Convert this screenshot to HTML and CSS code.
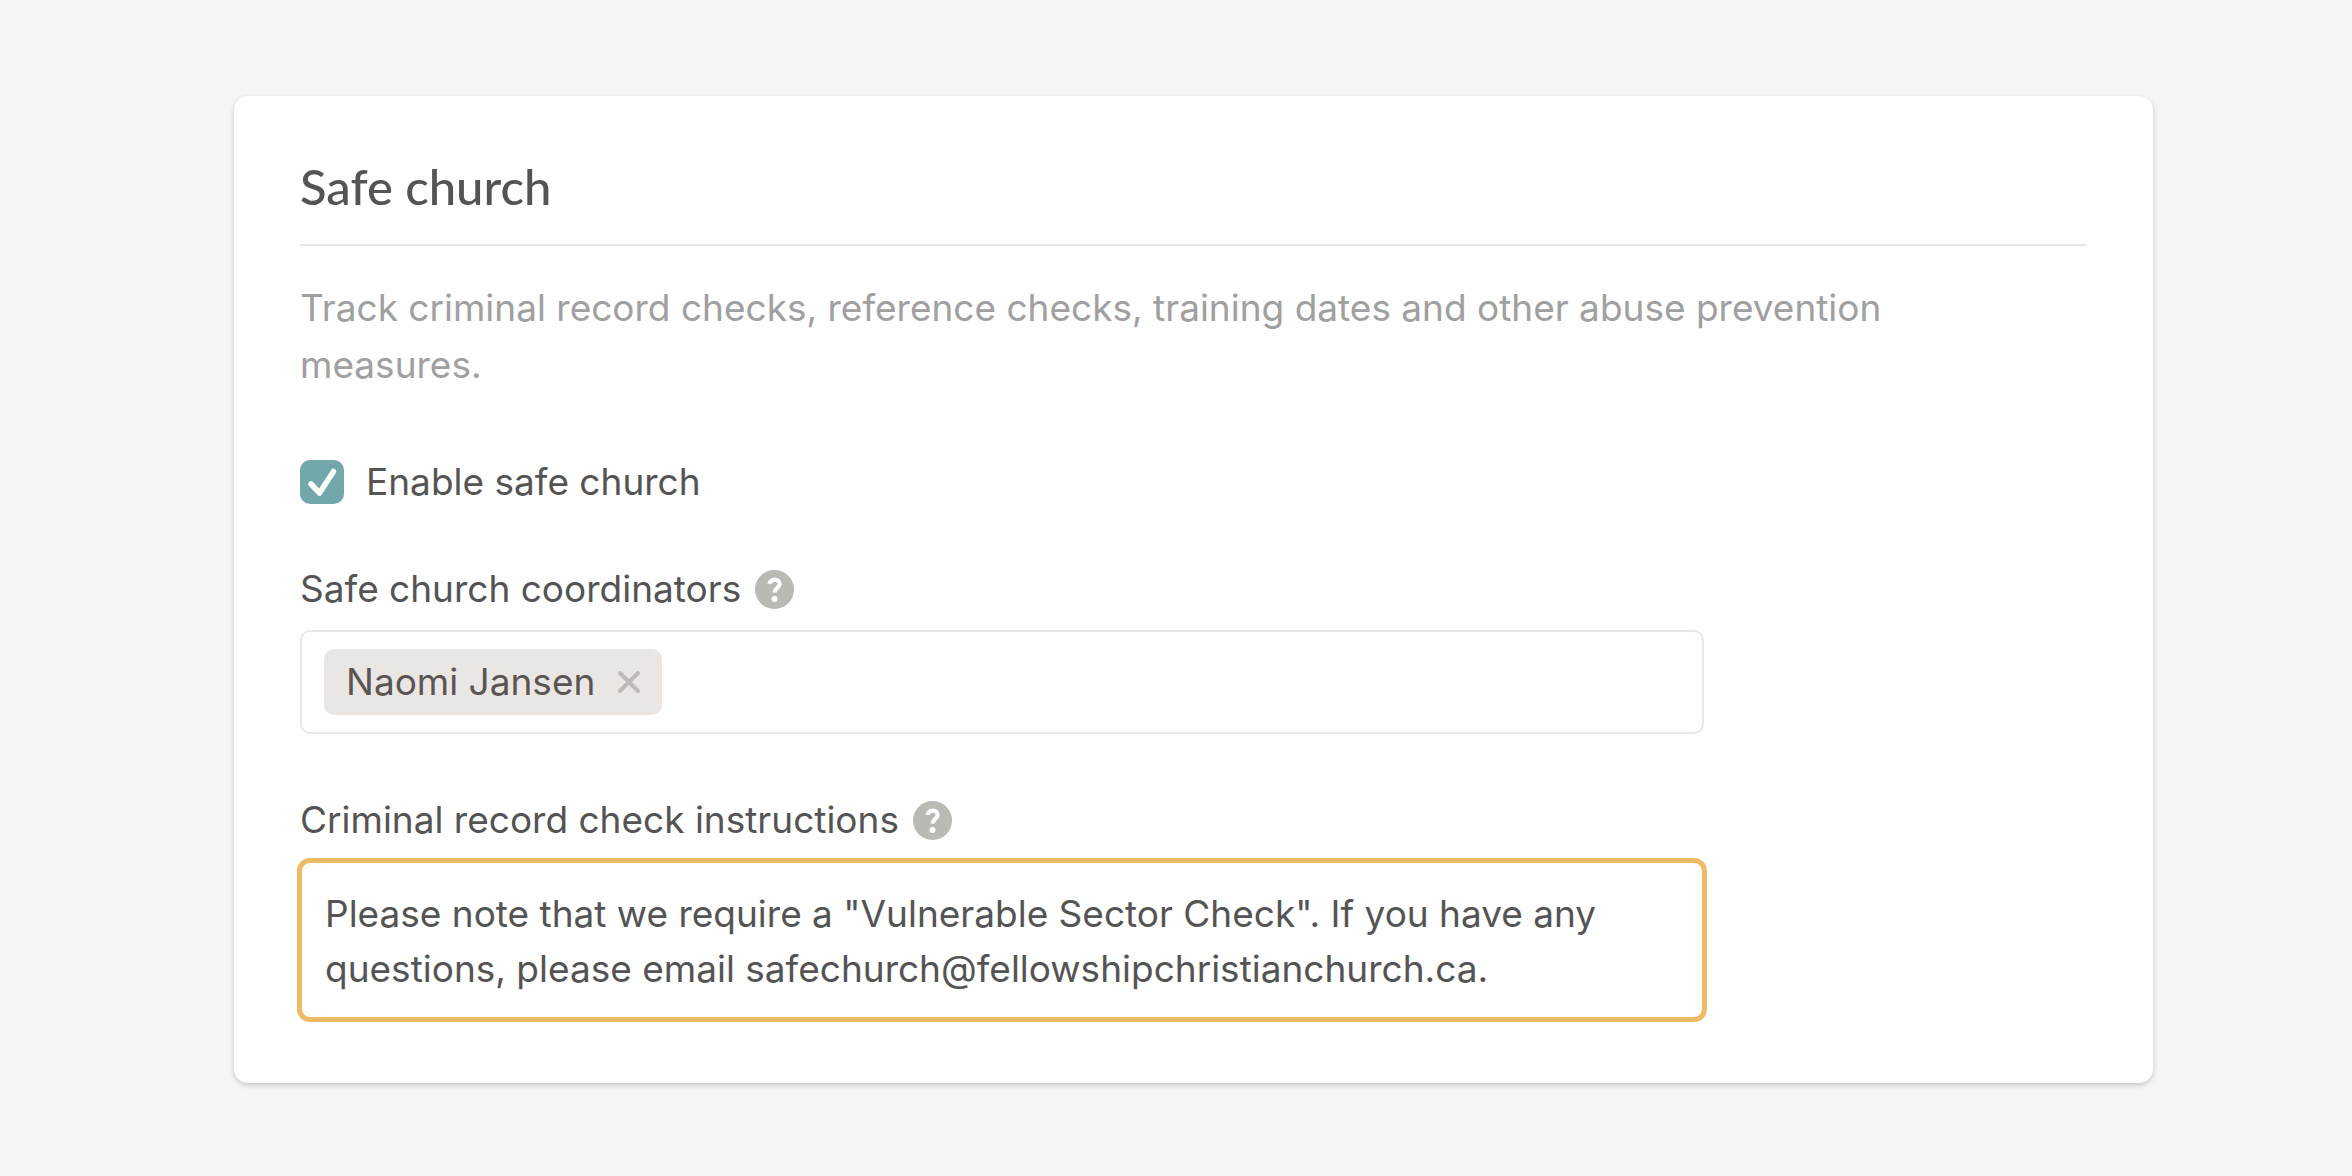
FILE: index.html
```html
<!DOCTYPE html>
<html lang="en">
<head>
<meta charset="utf-8">
<meta name="viewport" content="width=device-width, initial-scale=1">
<title>Safe church</title>
<link rel="stylesheet" href="styles.css">
</head>
<body>
<main class="page">
  <form class="card">
    <h1 class="card-title">Safe church</h1>
    <hr class="divider">
    <p class="intro">Track criminal record checks, reference checks, training dates and other abuse prevention measures.</p>

    <div class="toggle">
      <input class="checkbox" type="checkbox" id="enable" checked>
      <label for="enable">Enable safe church</label>
    </div>

    <div class="field">
      <div class="field-head">
        <label for="coordinators">Safe church coordinators</label>
        <button class="help" type="button" aria-label="Help with coordinators">
          <svg viewBox="0 0 38 38" aria-hidden="true"><circle cx="19" cy="19" r="19"/><path d="M14 13.500C15 7.800 24.200 8.200 24 13.800C23.800 17.500 19.300 17.500 19 22"/><circle class="dot" cx="19" cy="28.300" r="2.900"/></svg>
        </button>
      </div>
      <div class="tag-box">
        <span class="tag">Naomi Jansen
          <button class="tag-remove" type="button" aria-label="Remove Naomi Jansen">
            <svg viewBox="0 0 22 22" aria-hidden="true"><path d="M2 2L20 20M20 2L2 20"/></svg>
          </button>
        </span>
        <input class="tag-input" type="text" id="coordinators">
      </div>
    </div>

    <div class="field">
      <div class="field-head">
        <label for="instructions">Criminal record check instructions</label>
        <button class="help" type="button" aria-label="Help with instructions">
          <svg viewBox="0 0 38 38" aria-hidden="true"><circle cx="19" cy="19" r="19"/><path d="M14 13.500C15 7.800 24.200 8.200 24 13.800C23.800 17.500 19.300 17.500 19 22"/><circle class="dot" cx="19" cy="28.300" r="2.900"/></svg>
        </button>
      </div>
      <textarea class="textarea" id="instructions" rows="2" spellcheck="false">Please note that we require a "Vulnerable Sector Check". If you have any questions, please email safechurch@fellowshipchristianchurch.ca.</textarea>
    </div>
  </form>
</main>
</body>
</html>
```
FILE: styles.css
```css
* {
  box-sizing: border-box;
}

body {
  margin: 0;
  background: #f6f5f3;
  color: #545454;
  font: 400 37px/56px Inter, "Liberation Sans", sans-serif;
}

.page {
  padding: 96px 199px 92px 234px;
}

.card {
  padding: 58px 66px 64px;
  border-radius: 14px;
  background: #fefefe;
  box-shadow: 0 2px 5px rgba(60, 50, 60, 0.24);
}

.card-title {
  margin: 0;
  font: 500 49px/64px Lato, sans-serif;
}

.divider {
  height: 2px;
  margin: 26px 0 33px;
  border: 0;
  background: #e7e7e7;
}

.intro {
  max-width: 1680px;
  margin: 0;
  color: #a0a0a0;
  line-height: 57px;
}

.toggle {
  display: flex;
  align-items: center;
  gap: 22px;
  margin-top: 61px;
}

.checkbox {
  width: 44px;
  height: 44px;
  margin: 0;
  appearance: none;
  border-radius: 10px;
  background: #72a8ac url("data:image/svg+xml,%3Csvg xmlns='http://www.w3.org/2000/svg' viewBox='0 0 44 44'%3E%3Cpath d='M11 24L19.500 33L33.500 11.500' fill='none' stroke='white' stroke-width='5.500' stroke-linecap='round' stroke-linejoin='round'/%3E%3C/svg%3E");
}

.field {
  max-width: 1404px;
  margin-top: 51px;
}

.field + .field {
  margin-top: 58px;
}

.field-head {
  display: flex;
  align-items: center;
  gap: 14px;
  margin-bottom: 13px;
}

.help,
.tag-remove {
  padding: 0;
  border: 0;
  background: none;
}

.help {
  width: 39px;
  height: 39px;
}

.help svg,
.tag-remove svg {
  display: block;
  width: 100%;
}

.help svg {
  fill: #b8bab3;
}

.help path {
  fill: none;
  stroke: #fefefe;
  stroke-width: 4;
}

.help .dot {
  fill: #fefefe;
}

.tag-box {
  display: flex;
  align-items: center;
  height: 104px;
  padding: 0 22px;
  border: 2px solid #e8e8e8;
  border-radius: 10px;
}

.tag {
  display: flex;
  align-items: center;
  gap: 23px;
  height: 66px;
  padding: 0 22px;
  border-radius: 10px;
  background: #eae6e4;
  color: #5a5553;
}

.tag-remove {
  width: 22px;
  height: 22px;
}

.tag-remove path {
  fill: none;
  stroke: #bfbab8;
  stroke-width: 4;
  stroke-linecap: round;
}

.tag-input {
  flex: 1;
  min-width: 0;
  border: 0;
  outline: 0;
  background: none;
  font: inherit;
}

.textarea {
  display: block;
  width: 100%;
  height: 158px;
  padding: 23px;
  border: 2px solid #edbb66;
  border-radius: 10px;
  outline: 0;
  box-shadow: 0 0 0 3px #edbb66;
  background: #fefefe;
  color: inherit;
  font: inherit;
  line-height: 55px;
  resize: none;
  overflow: hidden;
}
```
